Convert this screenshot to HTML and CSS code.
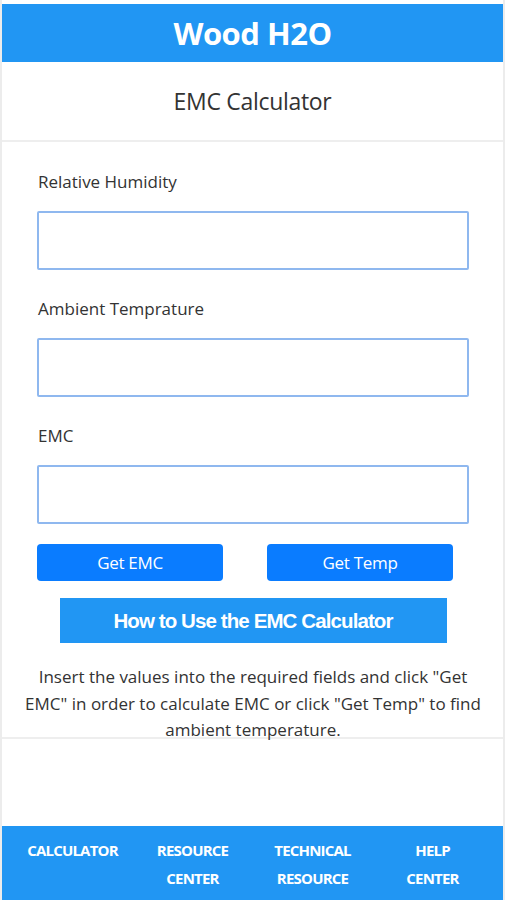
FILE: index.html
```html
<!DOCTYPE html>
<html>
<head>
<meta charset="utf-8">
<link rel="stylesheet" href="styles.css">
</head>
<body>
<div class="page">
  <header class="topbar">Wood H2O</header>
  <div class="subtitle">EMC Calculator</div>
  <main class="content">
    <form class="calc">
      <label class="field-label">Relative Humidity</label>
      <input class="field" type="text">
      <label class="field-label">Ambient Temprature</label>
      <input class="field" type="text">
      <label class="field-label">EMC</label>
      <input class="field" type="text">
      <div class="btn-row">
        <button type="button" class="btn">Get EMC</button>
        <button type="button" class="btn">Get Temp</button>
      </div>
      <button type="button" class="howto">How to Use the EMC Calculator</button>
      <p class="info">Insert the values into the required fields and click "Get EMC" in order to calculate EMC or click "Get Temp" to find ambient temperature.</p>
    </form>
  </main>
  <nav class="footer">
    <a class="nav-item">CALCULATOR</a>
    <a class="nav-item">RESOURCE<br>CENTER</a>
    <a class="nav-item">TECHNICAL<br>RESOURCE</a>
    <a class="nav-item">HELP<br>CENTER</a>
  </nav>
</div>
</body>
</html>
```

FILE: styles.css
```css
* { box-sizing: border-box; }
html, body { margin: 0; padding: 0; background: #fff; }
body {
  font-family: "Open Sans", "Noto Sans", sans-serif;
  color: #333;
}
.page {
  min-height: 900px;
  margin-right: 2px;
  padding-top: 4px;
  border-left: 2px solid #ececec;
  border-right: 2px solid #ececec;
  display: flex;
  flex-direction: column;
}
.topbar {
  background: #2196f3;
  color: #fff;
  height: 58px;
  display: flex;
  align-items: center;
  justify-content: center;
  font-size: 31px;
  font-weight: 700;
  letter-spacing: -0.5px;
}
.subtitle {
  height: 80px;
  display: flex;
  align-items: center;
  justify-content: center;
  font-size: 23px;
  letter-spacing: -0.3px;
  color: #333;
  border-bottom: 2px solid #eeeeee;
}
.content {
  flex: 1;
}
.calc {
  display: flex;
  flex-direction: column;
  padding: 26px 34px 0 35px;
  border-bottom: 2px solid #eeeeee;
}
.field-label {
  font-size: 17px;
  line-height: 28px;
  margin-left: 1px;
  margin-bottom: 15px;
}
.field {
  height: 59px;
  border: 2px solid #8fb8ef;
  border-radius: 2px;
  margin-bottom: 25px;
  font: inherit;
  outline: none;
}
.btn-row {
  display: flex;
  justify-content: space-between;
  margin-top: -5px;
  padding-right: 16px;
}
.btn {
  width: 186px;
  height: 37px;
  border: none;
  border-radius: 4px;
  background: #0a7cff;
  color: #fff;
  font-family: "Open Sans", "Noto Sans", sans-serif;
  font-size: 17px;
  letter-spacing: -0.3px;
  padding: 0;
}
.howto {
  align-self: center;
  margin-top: 17px;
  width: 387px;
  height: 45px;
  border: none;
  background: #2196f3;
  color: #fff;
  font-family: "Liberation Sans", Arial, sans-serif;
  font-weight: 700;
  font-size: 20.5px;
  letter-spacing: -0.9px;
  padding: 0;
}
.info {
  margin: 21px -19px -7px -19px;
  text-align: center;
  font-size: 17px;
  line-height: 26.5px;
}
.footer {
  background: #2196f3;
  height: 74px;
  display: grid;
  grid-template-columns: repeat(4, 120px);
  justify-content: center;
  padding-top: 10px;
}
.nav-item {
  color: #fff;
  font-weight: 700;
  font-size: 15px;
  letter-spacing: -0.8px;
  line-height: 28px;
  text-align: center;
}
```
